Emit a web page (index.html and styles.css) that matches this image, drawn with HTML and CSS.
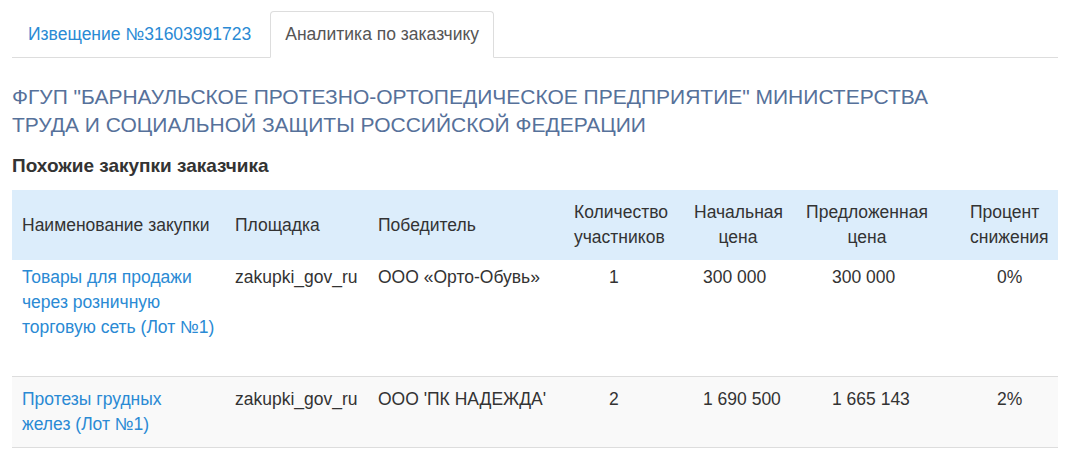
FILE: index.html
```html
<!DOCTYPE html>
<html lang="ru">
<head>
  <meta charset="UTF-8" />
  <meta name="viewport" content="width=device-width, initial-scale=1" />
  <title>Аналитика по заказчику</title>
  <link rel="stylesheet" href="styles.css">
</head>
<body>

  <div class="page">
    <ul class="tabs">
      <li><a href="#">Извещение №31603991723</a></li>
      <li class="active"><a href="#">Аналитика по заказчику</a></li>
    </ul>

    <h2 class="customer">ФГУП "БАРНАУЛЬСКОЕ ПРОТЕЗНО-ОРТОПЕДИЧЕСКОЕ ПРЕДПРИЯТИЕ" МИНИСТЕРСТВА ТРУДА И СОЦИАЛЬНОЙ ЗАЩИТЫ РОССИЙСКОЙ ФЕДЕРАЦИИ</h2>

    <h4 class="section-title">Похожие закупки заказчика</h4>

    <table class="purchases">
      <colgroup>
        <col class="w-name">
        <col class="w-site">
        <col class="w-winner">
        <col class="w-count">
        <col class="w-start">
        <col class="w-offer">
        <col class="w-percent">
      </colgroup>
      <thead>
        <tr>
          <th>Наименование закупки</th>
          <th>Площадка</th>
          <th>Победитель</th>
          <th>Количество участников</th>
          <th class="center">Начальная цена</th>
          <th class="center">Предложенная цена</th>
          <th class="percent">Процент снижения</th>
        </tr>
      </thead>
      <tbody>
        <tr class="first">
          <td><a href="#">Товары для продажи через розничную торговую сеть (Лот №1)</a></td>
          <td>zakupki_gov_ru</td>
          <td>ООО «Орто-Обувь»</td>
          <td class="count">1</td>
          <td class="start">300 000</td>
          <td class="offer">300 000</td>
          <td class="pct">0%</td>
        </tr>
        <tr class="striped">
          <td><a href="#">Протезы грудных <span class="nowrap">желез (Лот №1)</span></a></td>
          <td>zakupki_gov_ru</td>
          <td>ООО 'ПК НАДЕЖДА'</td>
          <td class="count">2</td>
          <td class="start">1 690 500</td>
          <td class="offer">1 665 143</td>
          <td class="pct">2%</td>
        </tr>
      </tbody>
    </table>
  </div>

</body>
</html>
```

FILE: styles.css
```css
body {
  margin: 0;
  font-family: "Liberation Sans", Arial, sans-serif;
  font-size: 17.5px;
  line-height: 25px;
  color: #333;
  background-color: #fff;
}

a {
  color: #2a8ad4;
  text-decoration: none;
}

.page {
  padding: 11px 9px 0 12px;
}

/* tabs */
.tabs {
  display: flex;
  margin: 0;
  padding: 0;
  list-style: none;
  border-bottom: 1px solid #ddd;
}

.tabs li {
  margin-right: 3px;
  margin-bottom: -1px;
}

.tabs li a {
  display: block;
  padding: 10px 15px;
  border: 1px solid transparent;
  border-radius: 4px 4px 0 0;
}

.tabs li.active a {
  color: #555;
  background-color: #fff;
  border-color: #ddd;
  border-bottom-color: transparent;
  padding: 10px 14px;
}

/* headings */
.customer {
  margin: 25px 0 0;
  max-width: 935px;
  font-size: 21px;
  line-height: 28px;
  font-weight: normal;
  color: #56719a;
}

.section-title {
  margin: 14px 0 12px;
  font-size: 19px;
  line-height: 25px;
  font-weight: bold;
  color: #333;
}

/* table */
.purchases {
  width: 100%;
  table-layout: fixed;
  border-collapse: collapse;
}

.w-name { width: 213px; }
.w-site { width: 143px; }
.w-winner { width: 196px; }
.w-count { width: 120px; }
.w-start { width: 108px; }
.w-offer { width: 150px; }
.w-percent { width: 116px; }

.purchases th {
  padding: 10px;
  text-align: left;
  font-weight: normal;
  vertical-align: middle;
  background-color: #dcedfb;
}

.purchases th.center {
  text-align: center;
}

.purchases th.percent {
  padding-left: 28px;
}

.purchases td {
  padding: 10px;
  vertical-align: top;
  border-top: 1px solid #ddd;
}

.purchases tr.first td {
  border-top: 0;
  padding-top: 5px;
  padding-bottom: 36px;
}

.purchases tr.striped td {
  background-color: #f9f9f9;
  border-bottom: 1px solid #ddd;
}

.purchases td.count { padding-left: 45px; }
.purchases td.start { padding-left: 19px; }
.purchases td.offer { padding-left: 40px; }
.purchases td.pct { padding-left: 55px; }

.nowrap {
  white-space: nowrap;
}
```
